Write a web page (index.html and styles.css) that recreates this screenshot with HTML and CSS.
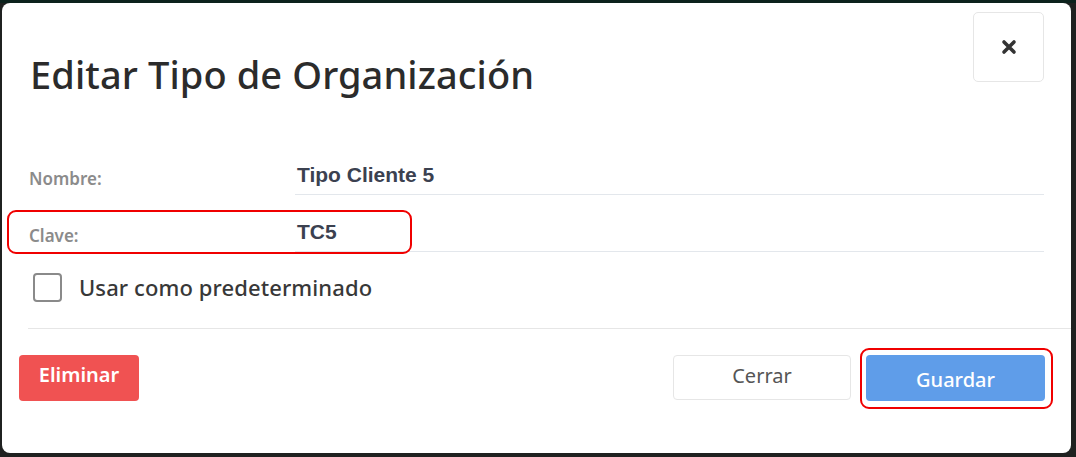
FILE: index.html
```html
<!DOCTYPE html>
<html lang="es">
<head>
    <meta charset="UTF-8">
    <meta name="viewport" content="width=device-width, initial-scale=1.0">
    <title>Editar Tipo de Organización</title>
    <link rel="stylesheet" href="styles.css">
</head>
<body>
    <div class="modal">
        <div class="modal-header">
            <h1>Editar Tipo de Organización</h1>
            <button class="close-btn" type="button" aria-label="Cerrar">
                <svg width="16" height="16" viewBox="0 0 16 16">
                    <path d="M3 3 L13 13 M13 3 L3 13" stroke="#333" stroke-width="3.6" stroke-linecap="round" fill="none"/>
                </svg>
            </button>
        </div>
        <form class="modal-body">
            <div class="field">
                <label>Nombre:</label>
                <div class="value">Tipo Cliente 5</div>
            </div>
            <div class="field">
                <label>Clave:</label>
                <div class="value">TC5</div>
                <div class="mark mark-clave"></div>
            </div>
            <label class="check">
                <span class="box"></span>
                Usar como predeterminado
            </label>
        </form>
        <div class="modal-footer">
            <button type="button" class="btn btn-danger">Eliminar</button>
            <div class="actions">
                <button type="button" class="btn btn-light">Cerrar</button>
                <button type="button" class="btn btn-primary">Guardar</button>
                <div class="mark mark-save"></div>
            </div>
        </div>
    </div>
</body>
</html>
```

FILE: styles.css
```css
body {
    margin: 0;
    padding: 3px 5px 4px 2px;
    background: linear-gradient(to bottom, #0c221d 0, #0c221d 3px, #1f2120 3px);
    font-family: 'Noto Sans', sans-serif;
    color: #333;
}
.modal {
    position: relative;
    height: 450px;
    background-color: #fff;
    border-radius: 8px;
    box-sizing: border-box;
}
.modal-header {
    display: flex;
    justify-content: space-between;
    align-items: flex-start;
    padding: 9px 27px 0 28px;
}
h1 {
    margin: 40px 0 0;
    font-size: 38px;
    font-weight: 500;
    line-height: 44px;
    color: #2b2b2b;
    letter-spacing: 0.1px;
}
.close-btn {
    width: 71px;
    height: 70px;
    background: #fff;
    border: 1px solid #e6e6e6;
    border-radius: 5px;
    display: flex;
    align-items: center;
    justify-content: center;
    padding: 0;
}
.modal-body {
    padding: 0 27px 0 27px;
    margin-top: 67px;
}
.field {
    position: relative;
    display: grid;
    grid-template-columns: 266px 1fr;
    align-items: end;
    margin-bottom: 25px;
}
.field label {
    font-size: 17px;
    font-weight: 600;
    color: #8b8b8b;
    line-height: 20px;
    padding-bottom: 6px;
}
.value {
    font-family: 'Liberation Sans', Arial, sans-serif;
    font-weight: bold;
    font-size: 21px;
    line-height: 24px;
    color: #3b4150;
    padding: 0 0 7px 2px;
    border-bottom: 1px solid #e3e7ec;
}
.check {
    display: flex;
    align-items: center;
    gap: 17px;
    margin-top: -5px;
    padding-left: 4px;
    font-size: 22px;
    font-weight: 500;
    color: #383838;
    letter-spacing: 0.1px;
}
.box {
    width: 25px;
    height: 25px;
    border: 2px solid #8a8a8a;
    border-radius: 4px;
}
.modal-footer {
    display: flex;
    justify-content: space-between;
    align-items: center;
    margin: 26px 0 0 26px;
    padding: 26px 26px 0 0;
    border-top: 1px solid #e6e6e6;
}
.btn {
    font-family: 'Noto Sans', sans-serif;
    font-size: 20px;
    height: 46px;
    border-radius: 4px;
    cursor: pointer;
}
.btn-danger {
    margin-left: -9px;
    width: 120px;
    background-color: #f05252;
    color: #fff;
    border: none;
    font-weight: 600;
    padding-bottom: 8px;
}
.actions {
    position: relative;
    display: flex;
    gap: 15px;
}
.btn-light {
    width: 178px;
    height: 45px;
    background-color: #fff;
    border: 1px solid #e6e6e6;
    color: #555;
    padding-bottom: 6px;
}
.btn-primary {
    width: 179px;
    background-color: #5f9de9;
    border: none;
    color: #fff;
    font-weight: 500;
    padding-top: 4px;
}
.mark {
    position: absolute;
    border: 2px solid #f00000;
    border-radius: 9px;
    pointer-events: none;
}
.mark-clave {
    left: -22px;
    top: -10px;
    width: 401px;
    height: 40px;
}
.mark-save {
    right: -8px;
    top: -7px;
    width: 189px;
    height: 57px;
}
```
